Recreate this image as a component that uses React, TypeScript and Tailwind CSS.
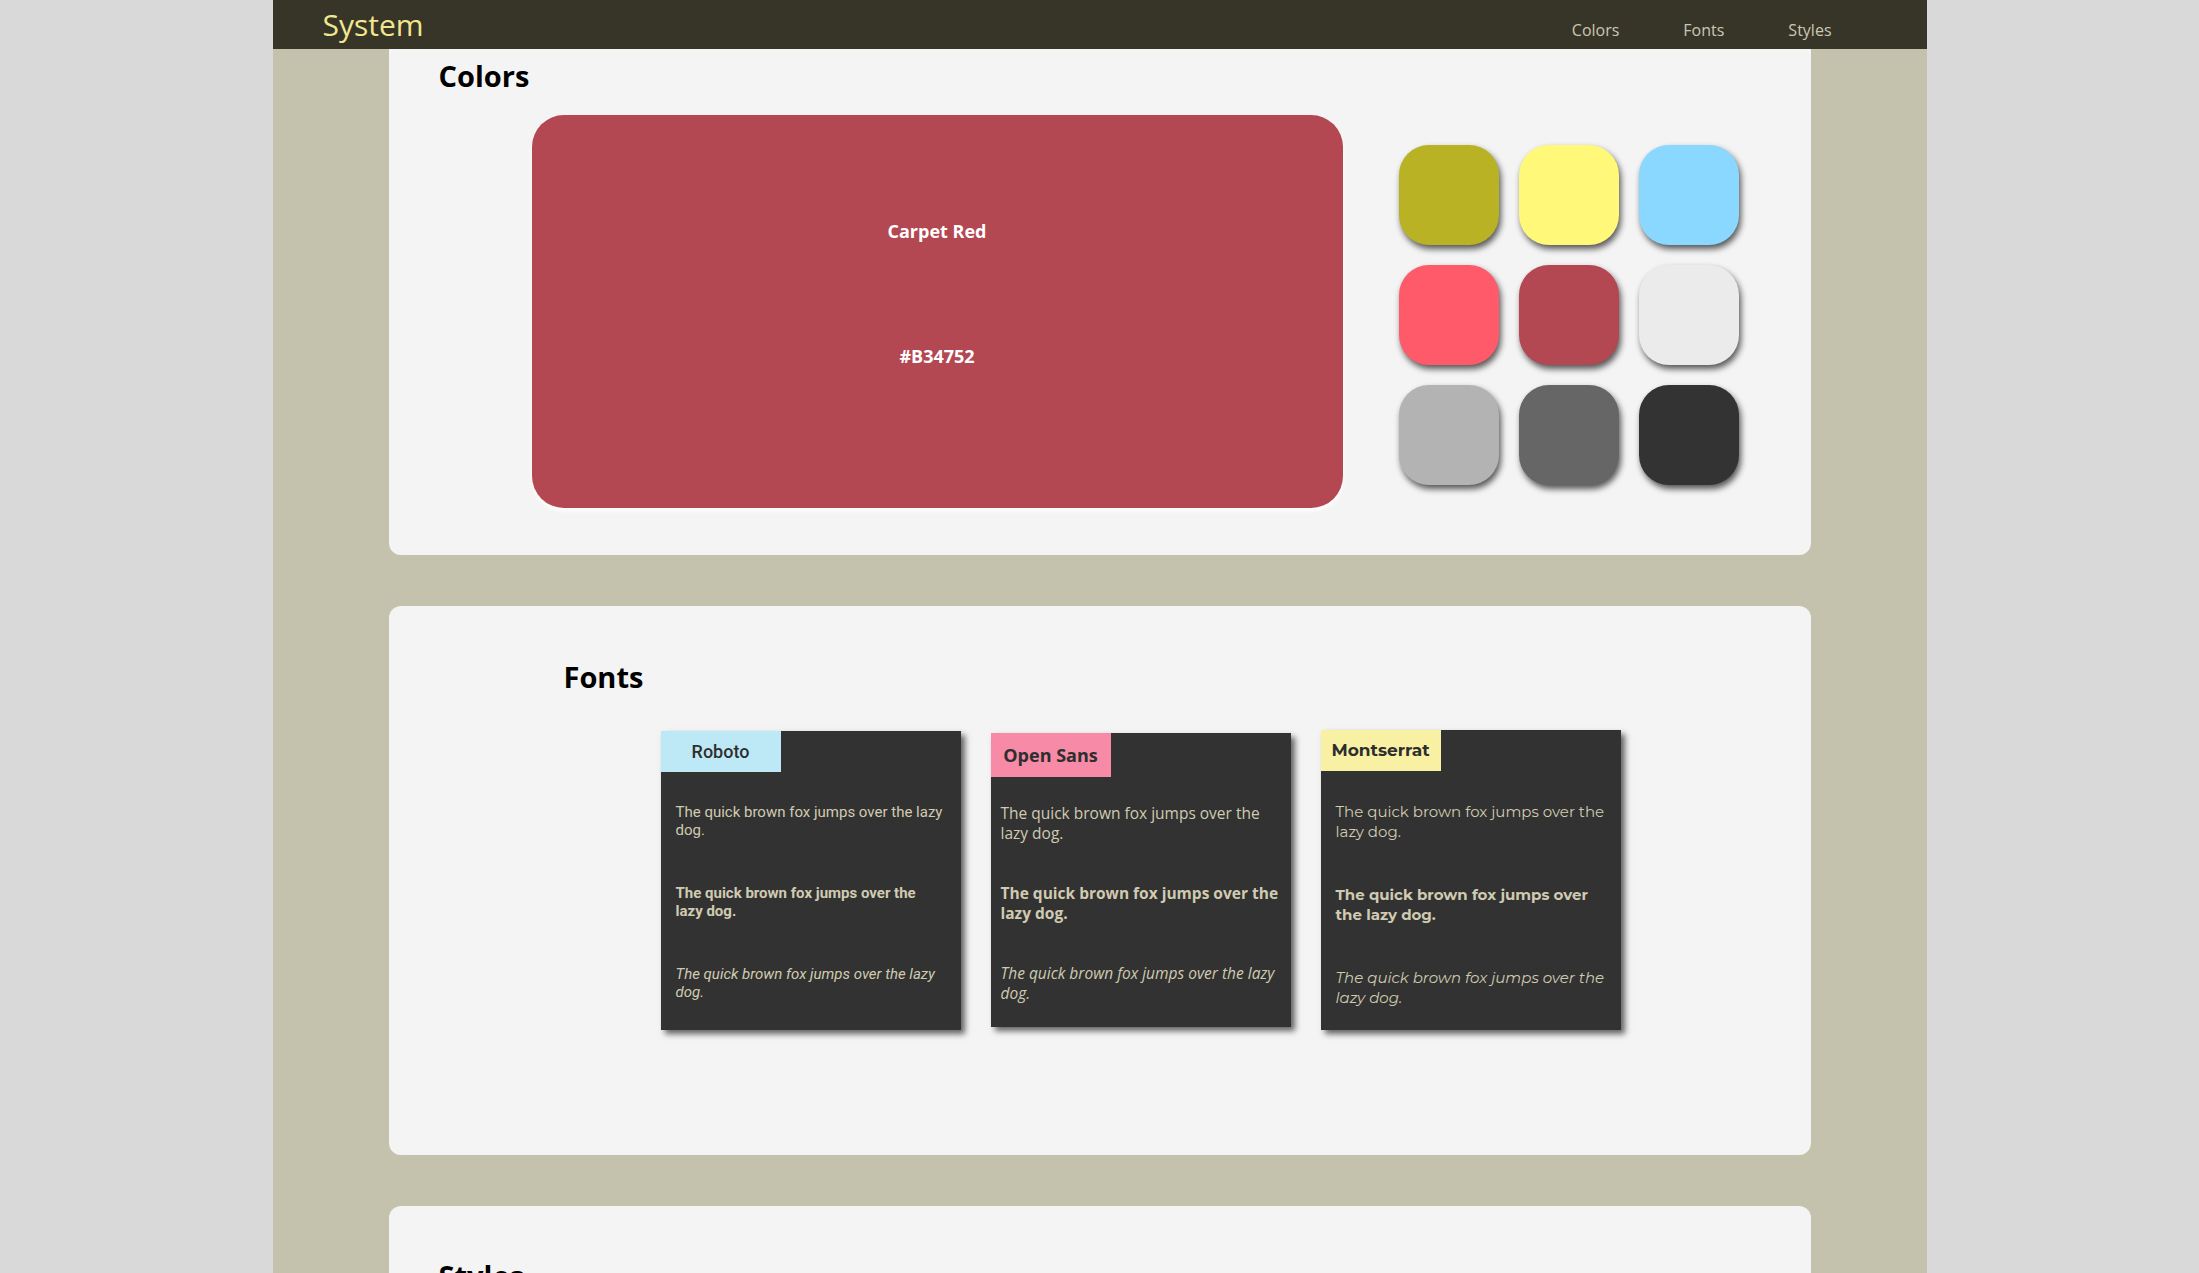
import React from 'react'

const swatches = [
  '#b8b224',
  '#fff878',
  '#8ad8ff',
  '#ff5a6a',
  '#b34752',
  '#ebebeb',
  '#b3b3b3',
  '#666666',
  '#333333',
]

const sample = 'The quick brown fox jumps over the lazy dog.'

function NavLink({ label }: { label: string }) {
  return <a className="text-[16px] text-[#c9c8b3] cursor-pointer">{label}</a>
}

export default function App() {
  return (
    <div className="min-h-screen bg-[#d9d9d9] font-['Open_Sans',sans-serif]">
      <div className="mx-auto w-[1654px] min-h-[1273px] bg-[#c4c2ad]">
        {/* Header */}
        <header className="h-[49px] bg-[#373428] flex items-center justify-between pl-[50px] pr-[95px]">
          <span className="text-[30px] text-[#f2e68e] leading-[40px]">System</span>
          <nav className="flex gap-[64px] mt-[11px]">
            <NavLink label="Colors" />
            <NavLink label="Fonts" />
            <NavLink label="Styles" />
          </nav>
        </header>

        <main className="px-[116px] flex flex-col gap-[51px]">
          {/* Colors */}
          <section className="bg-[#f4f4f4] rounded-b-[12px] pt-[8px] pb-[47px]">
            <h2 className="pl-[50px] text-[29px] font-bold text-black leading-[38px]">Colors</h2>
            <div className="flex items-start mt-[20px] pl-[143px]">
              <div className="w-[811px] h-[393px] rounded-[32px] bg-[#b34752] shadow-[0_3px_4px_rgba(255,255,255,0.9)] flex flex-col items-center pt-[104px] text-white font-bold text-[18px] leading-[24px]">
                <span>Carpet Red</span>
                <span className="mt-[101px]">#B34752</span>
              </div>
              <div className="ml-[56px] mt-[30px] grid grid-cols-[repeat(3,100px)] gap-[20px]">
                {swatches.map((c) => (
                  <div
                    key={c}
                    className="w-[100px] h-[100px] rounded-[30px] shadow-[2px_4px_6px_rgba(0,0,0,0.65)]"
                    style={{ backgroundColor: c }}
                  />
                ))}
              </div>
            </div>
          </section>

          {/* Fonts */}
          <section className="bg-[#f4f4f4] rounded-[12px] h-[549px] pt-[52px]">
            <h2 className="pl-[175px] text-[29px] font-bold text-black leading-[38px]">Fonts</h2>
            <div className="flex items-start gap-[30px] pl-[272px] mt-[35px]">
              {/* Roboto */}
              <div className="w-[300px] h-[299px] bg-[#323232] shadow-[4px_4px_6px_rgba(0,0,0,0.6)] font-['Roboto',sans-serif]">
                <div className="w-[120px] h-[41px] bg-[#bde9f7] flex items-center justify-center text-[18px] font-medium text-[#2e2e2e]">
                  Roboto
                </div>
                <div className="px-[15px] pt-[31px] flex flex-col gap-[45px] text-[15px] leading-[18px] text-[#d0cbb0]">
                  <p>{sample}</p>
                  <p className="font-bold">{sample}</p>
                  <p className="italic">{sample}</p>
                </div>
              </div>

              {/* Open Sans */}
              <div className="w-[300px] h-[294px] mt-[2px] bg-[#323232] shadow-[4px_4px_6px_rgba(0,0,0,0.6)] font-['Open_Sans',sans-serif]">
                <div className="w-[120px] h-[44px] bg-[#f78aa6] flex items-center justify-center text-[18px] font-bold text-[#2e2e2e]">
                  Open Sans
                </div>
                <div className="px-[10px] pt-[26px] flex flex-col gap-[40px] text-[15.5px] leading-[20px] text-[#d0cbb0]">
                  <p>{sample}</p>
                  <p className="font-bold">{sample}</p>
                  <p className="italic">{sample}</p>
                </div>
              </div>

              {/* Montserrat */}
              <div className="w-[300px] h-[300px] -mt-[1px] bg-[#323232] shadow-[4px_4px_6px_rgba(0,0,0,0.6)] font-['Montserrat','DejaVu_Sans',sans-serif]">
                <div className="w-[120px] h-[41px] bg-[#f8f1a4] flex items-center justify-center text-[17px] font-bold text-[#2e2e2e]">
                  Montserrat
                </div>
                <div className="px-[15px] pt-[31px] flex flex-col gap-[43px] text-[15px] leading-[20px] text-[#d0cbb0]">
                  <p>{sample}</p>
                  <p className="font-bold">{sample}</p>
                  <p className="italic">{sample}</p>
                </div>
              </div>
            </div>
          </section>

          {/* Styles */}
          <section className="bg-[#f4f4f4] rounded-t-[12px] h-[300px] pt-[51px]">
            <h2 className="pl-[50px] text-[29px] font-bold text-black leading-[38px]">Styles</h2>
          </section>
        </main>
      </div>
    </div>
  )
}
